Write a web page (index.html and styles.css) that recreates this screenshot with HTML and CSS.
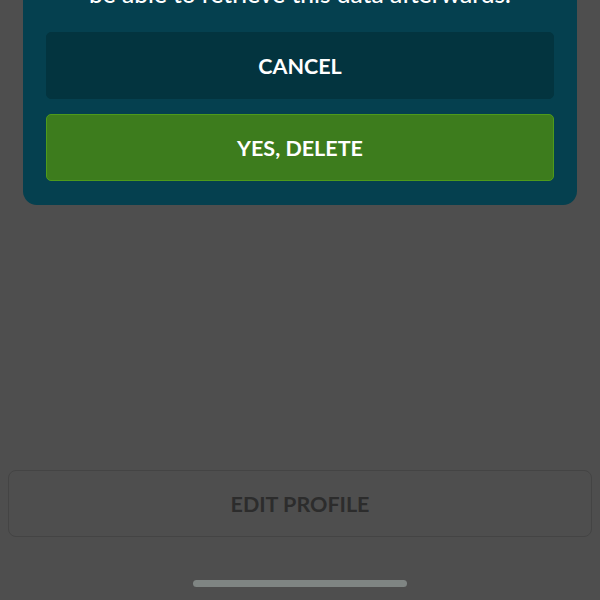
FILE: index.html
```html
<!DOCTYPE html>
<html lang="en">
<head>
<meta charset="utf-8">
<title>Delete account</title>
<link rel="stylesheet" href="styles.css">
</head>
<body>
<div class="screen">
  <div class="modal">
    <p class="modal-text">be able to retrieve this data afterwards.</p>
    <button class="btn btn-cancel">CANCEL</button>
    <button class="btn btn-delete">YES, DELETE</button>
  </div>
  <div class="spacer"></div>
  <button class="btn btn-edit">EDIT PROFILE</button>
  <div class="home-indicator"></div>
</div>
</body>
</html>
```

FILE: styles.css
```css
html, body {
  margin: 0;
  padding: 0;
  background: #4e4e4e;
  font-family: Lato, "Open Sans", sans-serif;
}
.screen {
  height: 600px;
  overflow: hidden;
  display: flex;
  flex-direction: column;
}
.modal {
  margin: -20px 23px 0;
  padding: 0 23px 24px;
  background: #05404f;
  border-radius: 0 0 14px 14px;
  display: flex;
  flex-direction: column;
  gap: 15px;
}
.modal-text {
  margin: 0 0 9px;
  color: #ffffff;
  font-size: 24.5px;
  line-height: 28px;
  font-weight: 500;
  text-align: center;
}
.btn {
  font-family: Lato, "Open Sans", sans-serif;
  font-weight: 700;
  font-size: 21.5px;
  height: 67px;
  border-radius: 5px;
  border: 1px solid transparent;
  display: flex;
  align-items: center;
  justify-content: center;
  padding: 0;
  color: #ffffff;
}
.btn-cancel {
  background: #03343f;
  border-color: #03343f;
}
.btn-delete {
  background: #3d7c1d;
  border-color: #4e9a1b;
}
.spacer {
  flex: 1;
}
.btn-edit {
  margin: 0 8px;
  background: transparent;
  border-color: #444444;
  border-radius: 8px;
  color: #2c2c2c;
}
.home-indicator {
  align-self: center;
  width: 214px;
  height: 7px;
  border-radius: 4px;
  background: #7f8583;
  margin: 43px 0 13px;
}
```
